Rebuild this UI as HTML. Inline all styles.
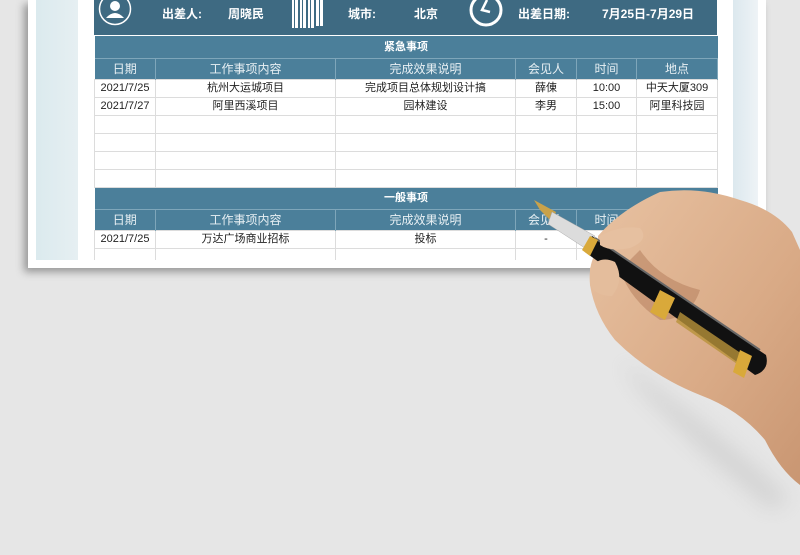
<!DOCTYPE html>
<html><head><meta charset="utf-8"><style>
*{margin:0;padding:0;box-sizing:border-box}
body{width:800px;height:555px;overflow:hidden;background:#e6e6e6;position:relative;font-family:"Liberation Sans","Noto Sans CJK SC",sans-serif}
.paper{position:absolute;left:28px;top:0;width:738px;height:268px;background:#fff;box-shadow:-4px 4px 8px rgba(0,0,0,.35)}
.lt{position:absolute;left:36px;top:0;width:42px;height:260px;background:linear-gradient(90deg,#dbeaee,#e6eff2)}
.rt{position:absolute;left:733px;top:0;width:25px;height:260px;background:linear-gradient(90deg,#dce8ee,#eef3f6)}
.hd{position:absolute;left:94px;top:0;width:623px;height:35px;background:#3e6a82;color:#fff;font-weight:bold;font-size:12px}
.hd span{position:absolute;top:5px}
.wrap{position:absolute;left:94px;top:36px;width:624px;height:224px;overflow:hidden}
table{border-collapse:collapse;width:623px;table-layout:fixed;font-size:11px;color:#222}
td{border:1px solid #dcdcdc;text-align:center;height:18px;padding:0;white-space:nowrap;overflow:hidden;line-height:16px}
.st td{background:#4b7f9a;color:#fff;font-weight:bold;height:22px;border:none;border-bottom:1px solid #7ea6ba}
.ch td{background:#4b7f9a;color:#e8f0f4;font-size:12px;height:21px;border:none;border-right:1px solid #7ea6ba}
</style></head><body>
<div class="paper"></div>
<div class="lt"></div><div class="rt"></div>
<div class="hd">
<svg style="position:absolute;left:4px;top:-8px" width="34" height="34" viewBox="0 0 34 34"><circle cx="17" cy="17" r="15.5" fill="none" stroke="#fff" stroke-width="1.5"/><circle cx="17" cy="14" r="5" fill="#fff"/><path d="M8 26 Q17 16 26 26 Z" fill="#fff"/></svg>
<span style="left:68px">出差人:</span><span style="left:134px">周晓民</span>
<svg style="position:absolute;left:198px;top:0" width="32" height="28"><g fill="#fff"><rect x="0" y="0" width="6" height="28"/><rect x="8" y="0" width="6" height="28"/><rect x="16" y="0" width="6" height="28"/><rect x="24" y="0" width="7" height="26"/></g><g fill="#3e6a82"><rect x="2" y="0" width="1" height="28"/><rect x="10" y="0" width="1" height="28"/><rect x="18" y="0" width="1" height="28"/><rect x="27" y="0" width="1" height="26"/></g></svg>
<span style="left:254px">城市:</span><span style="left:320px">北京</span>
<svg style="position:absolute;left:374px;top:-9px" width="36" height="38" viewBox="0 0 36 38"><circle cx="18" cy="19" r="15" fill="none" stroke="#fff" stroke-width="3"/><path d="M19 9 L14 19 L22 21" fill="none" stroke="#fff" stroke-width="2.5"/></svg>
<span style="left:424px">出差日期:</span><span style="left:508px">7月25日-7月29日</span>
</div>
<div class="wrap"><table>
<colgroup><col style="width:61px"><col style="width:180px"><col style="width:180px"><col style="width:61px"><col style="width:60px"><col style="width:81px"></colgroup>
<tr class="st"><td colspan="6">紧急事项</td></tr>
<tr class="ch"><td>日期</td><td>工作事项内容</td><td>完成效果说明</td><td>会见人</td><td>时间</td><td>地点</td></tr>
<tr><td>2021/7/25</td><td>杭州大运城项目</td><td>完成项目总体规划设计搞</td><td>薛倲</td><td>10:00</td><td>中天大厦309</td></tr>
<tr><td>2021/7/27</td><td>阿里西溪项目</td><td>园林建设</td><td>李男</td><td>15:00</td><td>阿里科技园</td></tr>
<tr><td></td><td></td><td></td><td></td><td></td><td></td></tr>
<tr><td></td><td></td><td></td><td></td><td></td><td></td></tr>
<tr><td></td><td></td><td></td><td></td><td></td><td></td></tr>
<tr><td></td><td></td><td></td><td></td><td></td><td></td></tr>
<tr class="st"><td colspan="6">一般事项</td></tr>
<tr class="ch"><td>日期</td><td>工作事项内容</td><td>完成效果说明</td><td>会见人</td><td>时间</td><td>地点</td></tr>
<tr><td>2021/7/25</td><td>万达广场商业招标</td><td>投标</td><td>-</td><td></td><td></td></tr>
<tr><td></td><td></td><td></td><td></td><td></td><td></td></tr>
</table></div>
<svg style="position:absolute;left:0;top:0" width="800" height="555" viewBox="0 0 800 555">
<defs><filter id="b"><feGaussianBlur stdDeviation="10"/></filter>
<linearGradient id="sk" x1="0" y1="0" x2="1" y2="1"><stop offset="0" stop-color="#e8c2a2"/><stop offset=".6" stop-color="#d9aa86"/><stop offset="1" stop-color="#c99672"/></linearGradient></defs>
<path d="M620 360 L700 420 L760 470 L790 500 L770 510 L700 450 L640 390 Z" fill="#aaa" opacity=".3" filter="url(#b)"/>
<path d="M598 236 Q620 210 660 192 Q700 186 740 200 Q775 210 792 232 L800 250 L800 485 Q780 470 765 440 Q740 410 700 395 Q650 375 615 340 Q595 315 590 285 Q588 262 598 250 Z" fill="url(#sk)"/>
<path d="M640 250 Q660 280 700 290 Q690 320 660 320 Q630 300 620 270 Z" fill="#b98462" opacity=".6"/>
<path d="M534 200 L556 212 L552 222 L540 210 Z" fill="#c9a24a"/>
<path d="M552 212 L595 236 L588 250 L548 224 Z" fill="#dcdcdc" stroke="#aaa" stroke-width=".5"/>
<path d="M592 236 L766 355 Q770 370 755 375 L585 252 Z" fill="#111"/>
<path d="M595 238 L760 350" stroke="#666" stroke-width="2"/>
<path d="M590 236 L598 240 L590 256 L582 250 Z" fill="#d9a93a"/>
<path d="M660 290 L675 298 L665 320 L650 312 Z" fill="#d9a93a"/>
<path d="M680 312 L745 356 L740 366 L676 322 Z" fill="#b8923a" opacity=".8"/>
<path d="M740 350 L752 356 L744 378 L733 372 Z" fill="#d9a93a"/>
<path d="M600 236 Q620 225 640 228 Q650 240 630 248 Q610 252 600 245 Z" fill="#e6c0a0"/>
<path d="M590 268 Q600 255 615 262 Q625 280 612 296 Q596 296 590 285 Z" fill="#e4bd9c"/>
</svg>
</body></html>
